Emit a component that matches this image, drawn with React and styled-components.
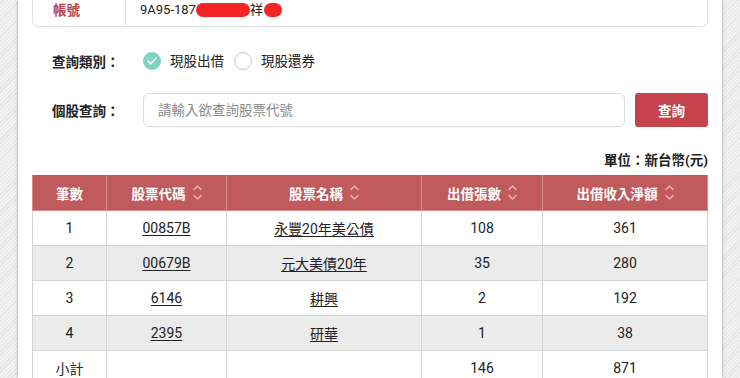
import React, { useState } from 'react';
import styled, { createGlobalStyle } from 'styled-components';

const GlobalStyle = createGlobalStyle`
  html, body {
    margin: 0;
    padding: 0;
    height: 100%;
    overflow: hidden;
  }
  body {
    font-family: Roboto, "Noto Sans CJK TC", sans-serif;
    background: repeating-linear-gradient(135deg, #f1f1f1 0 2px, #e4e4e4 2px 3px);
  }
`;

const Panel = styled.div`
  margin: 0 18px;
  height: 378px;
  background: #fff;
  box-shadow: 0 0 3px rgba(0,0,0,0.35);
  padding: 0 14px;
  box-sizing: border-box;
  overflow: hidden;
`;

const AccountBox = styled.div`
  height: 27px;
  border: 1px solid #e0e0e0;
  border-top: none;
  border-radius: 0 0 7px 7px;
  display: flex;
  box-sizing: border-box;
`;

const AccountLabel = styled.div`
  width: 93px;
  padding: 1px 0 0 20px;
  box-sizing: border-box;
  border-right: 1px solid #e0e0e0;
  color: #b8434a;
  font-weight: 700;
  font-size: 13.5px;
  line-height: 18px;
`;

const AccountValue = styled.div`
  padding: 1px 0 0 14px;
  font-size: 13px;
  line-height: 18px;
  color: #222;
  display: flex;
  align-items: flex-start;
`;

const Scribble = styled.span`
  display: inline-block;
  width: ${({ w }) => w}px;
  height: 14px;
  margin-top: 2px;
  background: #f22424;
  border-radius: 7px;
  margin-left: ${({ ml }) => ml}px;
`;

const Row = styled.div`
  display: flex;
  align-items: center;
  padding-left: 20px;
  margin-top: ${({ top }) => top}px;
`;

const FieldLabel = styled.div`
  width: 91px;
  font-size: 13.5px;
  font-weight: 700;
  color: #222;
`;

const RadioItem = styled.label`
  display: flex;
  align-items: center;
  gap: 9px;
  margin-right: 10px;
  font-size: 13.5px;
  line-height: 18px;
  color: #222;
  cursor: pointer;
`;

const RadioDot = styled.span`
  width: 18px;
  height: 18px;
  border-radius: 50%;
  box-sizing: border-box;
  border: 1px solid ${({ checked }) => (checked ? '#7ed3c1' : '#c8c8c8')};
  background: ${({ checked }) => (checked ? '#7ed3c1' : '#fff')};
  display: flex;
  align-items: center;
  justify-content: center;
`;

const SearchInput = styled.input`
  flex: 1;
  height: 34px;
  box-sizing: border-box;
  border: 1px solid #dcdcdc;
  border-radius: 6px;
  padding: 0 14px;
  font-size: 13.5px;
  font-family: Roboto, "Noto Sans CJK TC", sans-serif;
  outline: none;
  &::placeholder {
    color: #8a8a8a;
  }
`;

const SearchButton = styled.button`
  width: 73px;
  height: 34px;
  margin-left: 10px;
  border: none;
  border-radius: 3px;
  background: #c4434c;
  color: #fff;
  font-weight: 700;
  font-size: 13.5px;
  font-family: Roboto, "Noto Sans CJK TC", sans-serif;
`;

const Unit = styled.div`
  text-align: right;
  font-size: 13.5px;
  font-weight: 700;
  color: #222;
  margin-top: 24px;
  line-height: 18px;
`;

const Table = styled.table`
  margin-top: 6px;
  width: 100%;
  border-collapse: collapse;
  table-layout: fixed;
  font-size: 14px;
  color: #222;
`;

const Th = styled.th`
  background: #c05a5c;
  color: #fff;
  font-weight: 700;
  font-size: 13.5px;
  height: 35px;
  border: 1px solid #d98d8f;
  border-top: none;
  padding: 0;
`;

const HeadInner = styled.span`
  display: inline-flex;
  align-items: center;
  gap: 7px;
`;

const Tr = styled.tr`
  background: ${({ alt }) => (alt ? '#ebebeb' : '#fff')};
`;

const Td = styled.td`
  height: 34px;
  padding: 0;
  text-align: center;
  border: 1px solid #d4d4d4;
`;

const Link = styled.a`
  color: #222;
  text-decoration: underline;
  text-underline-offset: 2px;
`;

const SortIcon = () => (
  <svg width="9" height="17" viewBox="0 0 9 17" fill="none" stroke="#f0b8ba" strokeWidth="1.4" strokeLinecap="round" strokeLinejoin="round">
    <path d="M1 5.5 L4.5 2 L8 5.5" />
    <path d="M1 11.5 L4.5 15 L8 11.5" />
  </svg>
);

const Check = () => (
  <svg width="10" height="8" viewBox="0 0 10 8" fill="none" stroke="#fff" strokeWidth="1.5" strokeLinecap="round" strokeLinejoin="round">
    <path d="M1 4 L3.8 6.8 L9 1.2" />
  </svg>
);

const rows = [
  { n: 1, code: '00857B', name: '永豐20年美公債', qty: 108, amt: 361 },
  { n: 2, code: '00679B', name: '元大美債20年', qty: 35, amt: 280 },
  { n: 3, code: '6146', name: '耕興', qty: 2, amt: 192 },
  { n: 4, code: '2395', name: '研華', qty: 1, amt: 38 },
];

export default function App() {
  const [type, setType] = useState('lend');

  return (
    <>
      <GlobalStyle />
      <Panel>
        <AccountBox>
          <AccountLabel>帳號</AccountLabel>
          <AccountValue>
            9A95-187
            <Scribble w={54} ml={0} />
            祥
            <Scribble w={18} ml={1} />
          </AccountValue>
        </AccountBox>

        <Row top={24}>
          <FieldLabel>查詢類別：</FieldLabel>
          <RadioItem onClick={() => setType('lend')}>
            <RadioDot checked={type === 'lend'}>{type === 'lend' && <Check />}</RadioDot>
            現股出借
          </RadioItem>
          <RadioItem onClick={() => setType('return')}>
            <RadioDot checked={type === 'return'}>{type === 'return' && <Check />}</RadioDot>
            現股還券
          </RadioItem>
        </Row>

        <Row top={22}>
          <FieldLabel>個股查詢：</FieldLabel>
          <SearchInput placeholder="請輸入欲查詢股票代號" />
          <SearchButton>查詢</SearchButton>
        </Row>

        <Unit>單位：新台幣(元)</Unit>

        <Table>
          <colgroup>
            <col style={{ width: 74 }} />
            <col style={{ width: 120 }} />
            <col style={{ width: 195 }} />
            <col style={{ width: 121 }} />
            <col />
          </colgroup>
          <thead>
            <tr>
              <Th>筆數</Th>
              <Th><HeadInner>股票代碼<SortIcon /></HeadInner></Th>
              <Th><HeadInner>股票名稱<SortIcon /></HeadInner></Th>
              <Th><HeadInner>出借張數<SortIcon /></HeadInner></Th>
              <Th><HeadInner>出借收入淨額<SortIcon /></HeadInner></Th>
            </tr>
          </thead>
          <tbody>
            {rows.map((r, i) => (
              <Tr key={r.n} alt={i % 2 === 1}>
                <Td>{r.n}</Td>
                <Td><Link>{r.code}</Link></Td>
                <Td><Link>{r.name}</Link></Td>
                <Td>{r.qty}</Td>
                <Td>{r.amt}</Td>
              </Tr>
            ))}
            <Tr>
              <Td>小計</Td>
              <Td />
              <Td />
              <Td>146</Td>
              <Td>871</Td>
            </Tr>
          </tbody>
        </Table>
      </Panel>
    </>
  );
}
